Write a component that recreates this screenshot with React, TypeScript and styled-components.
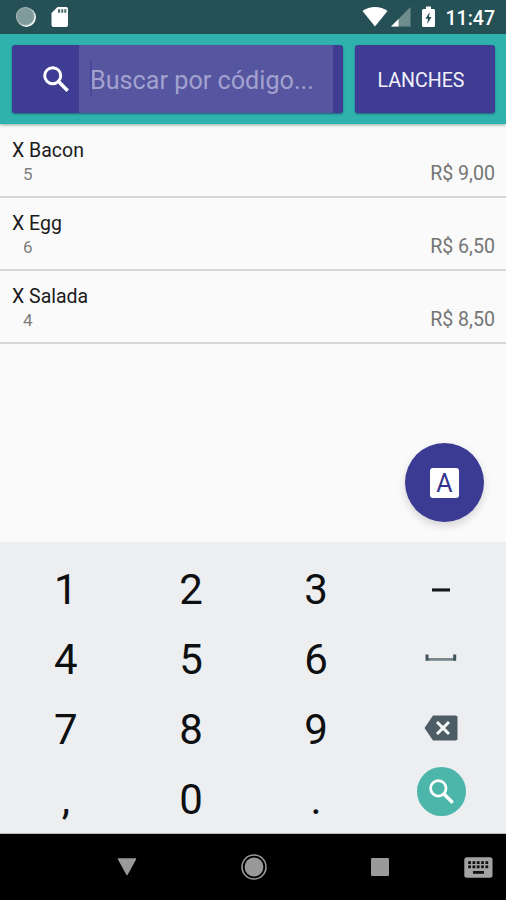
import React from "react";
import styled, { createGlobalStyle } from "styled-components";

const GlobalStyle = createGlobalStyle`
  * { box-sizing: border-box; }
  body { margin: 0; background: #fafafa; font-family: Roboto, "Liberation Sans", sans-serif; }
  button { font: inherit; border: 0; padding: 0; margin: 0; background: none; }
  svg { display: block; flex: none; }
`;

const Screen = styled.div`
  display: flex;
  flex-direction: column;
  width: 506px;
  height: 900px;
  overflow: hidden;
  background: #fafafa;
`;

const StatusBar = styled.header`
  display: flex;
  align-items: center;
  justify-content: space-between;
  height: 34px;
  padding: 0 11px 0 15px;
  background: #255156;
`;

const StatusGroup = styled.div<{ $gap: number }>`
  display: flex;
  align-items: center;
  gap: ${(p) => p.$gap}px;
`;

const Clock = styled.span`
  margin-left: 4px;
  color: #fff;
  font-size: 19.5px;
  font-weight: 500;
  line-height: 24px;
  padding-top: 3px;
`;

const AppBar = styled.div`
  display: flex;
  gap: 12px;
  height: 90px;
  flex: none;
  padding: 11px 11px 11px 12px;
  background: #2fb2ae;
  box-shadow: 0 1px 3px rgba(0, 60, 60, 0.45);
  z-index: 1;
`;

const SearchBox = styled.div`
  display: flex;
  width: 331px;
  height: 68px;
  padding-right: 10px;
  border-radius: 3px;
  background: #3f3d93;
  box-shadow: 0 1px 2px rgba(20, 40, 90, 0.6);
`;

const SearchIconSlot = styled.div`
  display: flex;
  align-items: center;
  width: 67px;
  padding-left: 31px;
`;

const SearchField = styled.div`
  display: flex;
  align-items: center;
  flex: 1;
  padding-left: 11px;
  padding-top: 4px;
  background: #5655a0;
`;

const Caret = styled.span`
  width: 2px;
  height: 35px;
  margin: -5px -2px 0 0;
  background: #49489a;
`;

const Placeholder = styled.span`
  color: #a3a2cf;
  font-size: 25.2px;
  line-height: 32px;
  white-space: nowrap;
`;

const CategoryButton = styled.button`
  && {
    width: 140px;
    height: 68px;
    padding: 2px 8px 0 0;
    border-radius: 3px;
    background: #3f3d93;
    box-shadow: 0 1px 2px rgba(20, 40, 90, 0.6);
    color: #f1f1fb;
    font-size: 19.6px;
  }
`;

const Content = styled.main`
  position: relative;
  height: 418px;
  flex: none;
  padding-top: 1px;
`;

const ProductRow = styled.div`
  display: flex;
  justify-content: space-between;
  height: 73px;
  padding: 13px 11px 0 12px;
  border-bottom: 2px solid #d6d6d6;
`;

const ProductName = styled.div`
  color: #1b1b1b;
  font-size: 19.5px;
  line-height: 26px;
`;

const ProductCode = styled.div`
  padding-left: 11px;
  color: #7d7d7d;
  font-size: 17px;
  line-height: 21px;
`;

const Price = styled.div`
  padding-top: 23px;
  color: #757575;
  font-size: 19.6px;
  line-height: 26px;
`;

const FloatingButton = styled.button`
  && {
    position: absolute;
    right: 22px;
    bottom: 20px;
    display: flex;
    align-items: center;
    justify-content: center;
    width: 79px;
    height: 79px;
    border-radius: 50%;
    background: #3c3b94;
    box-shadow: 0 4px 8px rgba(0, 0, 0, 0.15);
  }
`;

const LetterTile = styled.span`
  width: 29px;
  height: 30px;
  border-radius: 3px;
  background: #fff;
  color: #35348d;
  font-size: 25px;
  line-height: 31px;
  text-align: center;
`;

const Keypad = styled.section`
  display: grid;
  grid-template-columns: repeat(4, 125.2px);
  grid-auto-rows: 70px;
  height: 292px;
  flex: none;
  padding: 13px 0 0 3.2px;
  background: #eceef0;
  border-bottom: 1px solid #b9bbbc;
`;

const Key = styled.button<{ $shift?: number }>`
  && {
    display: flex;
    align-items: center;
    justify-content: center;
    margin-top: ${(p) => p.$shift ?? 0}px;
    color: #0d0f10;
    font-size: 42px;
    line-height: 70px;
  }
`;

const GoButton = styled.span`
  display: flex;
  align-items: center;
  justify-content: center;
  width: 49px;
  height: 49px;
  border-radius: 50%;
  background: #4cb6aa;
`;

const NavBar = styled.nav`
  display: flex;
  align-items: center;
  flex: 1;
  padding-left: 117px;
  background: #000;
`;

const NavItem = styled.div<{ $width: number; $gap: number }>`
  width: ${(p) => p.$width}px;
  margin-right: ${(p) => p.$gap}px;
`;

const products = [
  { name: "X Bacon", code: "5", price: "R$ 9,00" },
  { name: "X Egg", code: "6", price: "R$ 6,50" },
  { name: "X Salada", code: "4", price: "R$ 8,50" },
];

const Magnifier = ({ size }: { size: number }) => (
  <svg width={size} height={size} viewBox="0 0 26 26" fill="none" stroke="#fff">
    <circle cx="9.7" cy="9.7" r="8" strokeWidth="2.9" />
    <path d="M15.3 15.3 24.7 24.7" strokeWidth="3.5" />
  </svg>
);

const SpinnerIcon = () => (
  <svg width="22" height="22" viewBox="0 0 22 22">
    <circle cx="11.3" cy="11.3" r="9.6" fill="#fff" />
    <circle cx="10.3" cy="10.3" r="9.4" fill="#a3b5b6" />
    <circle cx="10.4" cy="10.4" r="8.4" fill="#7f9b9b" />
  </svg>
);

const SdCardIcon = () => (
  <svg width="18" height="22" viewBox="0 0 18 22">
    <path d="M6.5 1H15Q17 1 17 3V19Q17 21 15 21H2.5Q.5 21 .5 19V7Z" fill="#fff" />
    <path d="M7 3.3h2.1v3.5H7zM10.2 3.3h2v3.5h-2zM13.3 3.3h2v3.5h-2z" fill="#45686c" />
  </svg>
);

const WifiIcon = () => (
  <svg width="26" height="22" viewBox="0 0 26 22">
    <path d="M.5 5Q6 1 13 1T25.5 5L13 20.5Z" fill="#fff" />
  </svg>
);

const SignalIcon = () => (
  <svg width="20" height="20" viewBox="0 0 20 20">
    <path d="M0 19.5 19.5 0V19.5Z" fill="#6f8c8f" />
    <path d="M0 19.5 7.5 12V19.5Z" fill="#fff" />
  </svg>
);

const BatteryIcon = () => (
  <svg width="13" height="22" viewBox="0 0 13 22">
    <path d="M4 .5H9V3H11.5Q13 3 13 4.5V19.5Q13 21 11.5 21H1.5Q0 21 0 19.5V4.5Q0 3 1.5 3H4Z" fill="#fff" />
    <path d="M7.7 6 3.4 12.8H6L5.2 18 9.6 11H7Z" fill="#255156" />
  </svg>
);

const DashIcon = () => (
  <svg width="18" height="4" viewBox="0 0 18 4">
    <path d="M0 .4H18V3.5H0Z" fill="#121617" />
  </svg>
);

const SpaceIcon = () => (
  <svg width="32" height="8" viewBox="0 0 32 8">
    <path d="M3 4H29V6.8H3Z" fill="#78878c" />
    <path d="M.5.5h3v6.3h-3zM28.2.5h3v6.3h-3z" fill="#40525a" />
  </svg>
);

const BackspaceIcon = () => (
  <svg width="34" height="26" viewBox="0 0 34 26">
    <path d="M9 .5H31.5Q33.5 .5 33.5 2.5V23.5Q33.5 25.5 31.5 25.5H9L.5 13Z" fill="#4c5d65" />
    <path d="M13 7 25 19M25 7 13 19" stroke="#f5f7f8" strokeWidth="3" />
  </svg>
);

const BackIcon = () => (
  <svg width="20" height="18" viewBox="0 0 20 18">
    <path d="M1.5 1H18.5L10 16.5Z" fill="#999" stroke="#999" strokeWidth="1.5" strokeLinejoin="round" />
  </svg>
);

const HomeIcon = () => (
  <svg width="26" height="26" viewBox="0 0 26 26">
    <circle cx="13" cy="13" r="12" fill="none" stroke="#999" strokeWidth="1.6" />
    <circle cx="13" cy="13" r="9.4" fill="#999" />
  </svg>
);

const RecentsIcon = () => (
  <svg width="18" height="18" viewBox="0 0 18 18">
    <rect width="18" height="18" rx="1" fill="#999" />
  </svg>
);

const KeyboardIcon = () => (
  <svg width="29" height="21" viewBox="0 0 29 21">
    <rect x=".3" y=".3" width="28.2" height="20.4" rx="2.5" fill="#a3a3a3" />
    {[4.2, 8.4].map((y) =>
      [4.2, 8.5, 12.8, 17.1, 21.4].map((x) => (
        <rect key={`${x}-${y}`} x={x} y={y} width="2.8" height="2.8" fill="#111" />
      ))
    )}
    <rect x="9" y="14" width="11" height="2.8" fill="#111" />
  </svg>
);

export default function App() {
  return (
    <Screen>
      <GlobalStyle />
      <StatusBar>
        <StatusGroup $gap={14}>
          <SpinnerIcon />
          <SdCardIcon />
        </StatusGroup>
        <StatusGroup $gap={11}>
          <StatusGroup $gap={3}>
            <WifiIcon />
            <SignalIcon />
          </StatusGroup>
          <StatusGroup $gap={7}>
            <BatteryIcon />
            <Clock>11:47</Clock>
          </StatusGroup>
        </StatusGroup>
      </StatusBar>
      <AppBar>
        <SearchBox>
          <SearchIconSlot>
            <Magnifier size={26} />
          </SearchIconSlot>
          <SearchField>
            <Caret />
            <Placeholder>Buscar por código...</Placeholder>
          </SearchField>
        </SearchBox>
        <CategoryButton>LANCHES</CategoryButton>
      </AppBar>
      <Content>
        {products.map((p) => (
          <ProductRow key={p.code}>
            <div>
              <ProductName>{p.name}</ProductName>
              <ProductCode>{p.code}</ProductCode>
            </div>
            <Price>{p.price}</Price>
          </ProductRow>
        ))}
        <FloatingButton>
          <LetterTile>A</LetterTile>
        </FloatingButton>
      </Content>
      <Keypad>
        <Key>1</Key>
        <Key>2</Key>
        <Key>3</Key>
        <Key><DashIcon /></Key>
        <Key>4</Key>
        <Key>5</Key>
        <Key>6</Key>
        <Key $shift={-4}><SpaceIcon /></Key>
        <Key>7</Key>
        <Key>8</Key>
        <Key>9</Key>
        <Key $shift={-4}><BackspaceIcon /></Key>
        <Key>,</Key>
        <Key>0</Key>
        <Key>.</Key>
        <Key $shift={-18}><GoButton><Magnifier size={25} /></GoButton></Key>
      </Keypad>
      <NavBar>
        <NavItem $width={20} $gap={103.5}><BackIcon /></NavItem>
        <NavItem $width={26} $gap={104.5}><HomeIcon /></NavItem>
        <NavItem $width={18} $gap={75}><RecentsIcon /></NavItem>
        <NavItem $width={29} $gap={0}><KeyboardIcon /></NavItem>
      </NavBar>
    </Screen>
  );
}
